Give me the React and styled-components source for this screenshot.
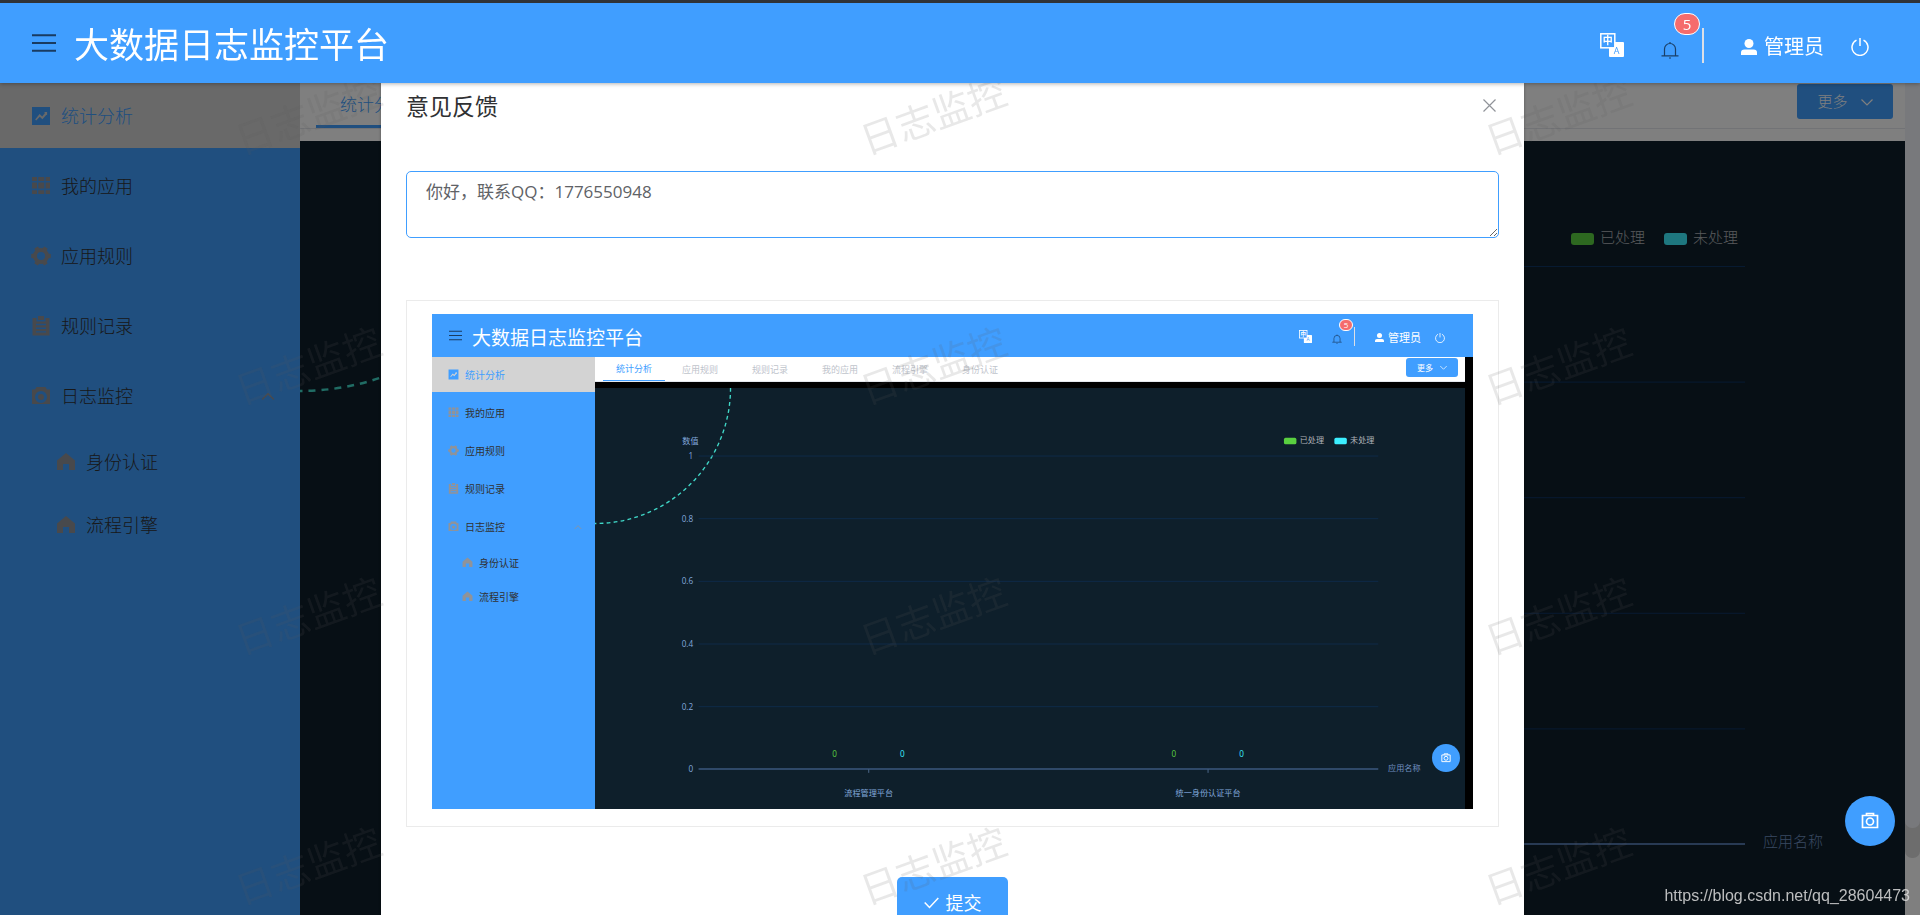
import React, { useState } from "react";
import styled, { createGlobalStyle, css, ThemeProvider } from "styled-components";

const GlobalStyle = createGlobalStyle`
* {
  box-sizing: border-box;
}
body {
  margin: 0;
  overflow: hidden;
  font-family: "Open Sans", "Noto Sans CJK SC", sans-serif;
  font-weight: 300;
  color: #303133;
}
button, textarea {
  font-family: inherit;
  font-weight: inherit;
}
`

// sizes of the live page
const pageSizes = {
  navHeight: 80, navLeft: 32, navRight: 51, menuIcon: 24, menuGap: 18, title: 35, titleTop: 2,
  translate: 24, translateGap: 37, bell: 18, bellTop: 14, bellGap: 23,
  badgeW: 26, badgeH: 22, badgeTop: -28, badgeLeft: 13, badgeFont: 15,
  dividerW: 2, dividerH: 35, dividerTop: 4, dividerGap: 37, user: 16, userGap: 7, userFont: 20, userTop: 8, powerGap: 27, power: 18,
  side: 300, item: 65, itemGap: 5, itemPad: 31, itemFont: 18, icon: 20, iconGap: 10, subItem: 58, subPad: 56, arrow: 14, arrowRight: 25,
  tabsHeight: 46, tabsLeft: 16, tabFont: 17, activePad: 24, tabPad: 30, tabBar: 3,
  moreW: 96, moreH: 35, moreRight: 12, moreFont: 15, moreGap: 13, moreIcon: 12,
  contentGap: 12, contentBg: "#ffffff", float: 50, floatIcon: 18, floatRight: 25, floatBottom: 69
}

// sizes of the captured preview in the dialog
const previewSizes = {
  navHeight: 43, navLeft: 17, navRight: 28, menuIcon: 13, menuGap: 10, title: 19, titleTop: 5,
  translate: 13, translateGap: 20, bell: 10, bellTop: 7, bellGap: 12,
  badgeW: 14, badgeH: 12, badgeTop: -15, badgeLeft: 7, badgeFont: 8,
  dividerW: 1, dividerH: 19, dividerTop: 2, dividerGap: 20, user: 9, userGap: 4, userFont: 11, userTop: 4, powerGap: 14, power: 10,
  side: 163, item: 35, itemGap: 3, itemPad: 16, itemFont: 10, icon: 11, iconGap: 6, subItem: 31, subPad: 30, arrow: 8, arrowRight: 13,
  tabsHeight: 25, tabsLeft: 8, tabFont: 9, activePad: 13, tabPad: 17, tabBar: 1,
  moreW: 52, moreH: 19, moreRight: 7, moreFont: 8, moreGap: 7, moreIcon: 7,
  contentGap: 6, contentBg: "#000000", float: 28, floatIcon: 10, floatRight: 13, floatBottom: 37
}

const Page = styled.div`
display: flex;
flex-direction: column;
height: 100vh;
overflow: hidden;
border-top: 3px solid #303336;
`
const Nav = styled.header`
position: relative;
z-index: 10;
flex: none;
display: flex;
align-items: center;
height: ${p => p.theme.navHeight}px;
padding: 0 ${p => p.theme.navRight}px 0 ${p => p.theme.navLeft}px;
background-color: #409eff;
box-shadow: 0 1px 4px rgba(0, 0, 0, 0.3);
color: #fff;
`
const IconButton = styled.button`
position: relative;
display: flex;
padding: 0;
border: 0;
background: none;
color: inherit;
cursor: pointer;
`
const MenuButton = styled(IconButton)`
margin-right: ${p => p.theme.menuGap}px;
color: #193b61;
`
const BrandTitle = styled.h1`
flex: 1;
margin: ${p => p.theme.titleTop}px 0 0;
font-size: ${p => p.theme.title}px;
font-weight: 400;
line-height: 1;
white-space: nowrap;
`
const TranslateButton = styled(IconButton)`
margin-right: ${p => p.theme.translateGap}px;
margin-top: ${p => p.theme.dividerTop}px;
`
const BellButton = styled(IconButton)`
margin-top: ${p => p.theme.bellTop}px;
margin-right: ${p => p.theme.bellGap}px;
color: #1b4068;
`
const Badge = styled.span`
position: absolute;
top: ${p => p.theme.badgeTop}px;
left: ${p => p.theme.badgeLeft}px;
display: flex;
align-items: center;
justify-content: center;
width: ${p => p.theme.badgeW}px;
height: ${p => p.theme.badgeH}px;
border: 1px solid #fff;
border-radius: 12px;
background-color: #f56c6c;
color: #fff;
font-size: ${p => p.theme.badgeFont}px;
font-weight: 400;
line-height: 1;
`
const Divider = styled.span`
width: ${p => p.theme.dividerW}px;
height: ${p => p.theme.dividerH}px;
margin-top: ${p => p.theme.dividerTop}px;
margin-right: ${p => p.theme.dividerGap}px;
background-color: #dcdfe6;
`
const User = styled.span`
display: flex;
align-items: center;
gap: ${p => p.theme.userGap}px;
margin-top: ${p => p.theme.userTop}px;
margin-right: ${p => p.theme.powerGap}px;
font-size: ${p => p.theme.userFont}px;
font-weight: 400;
line-height: 1;
white-space: nowrap;
`
const PowerButton = styled(IconButton)`
margin-top: ${p => p.theme.userTop}px;
`

const Main = styled.div`
position: relative;
flex: 1;
display: flex;
min-height: 0;
`
const Sidebar = styled.nav`
flex: none;
width: ${p => p.theme.side}px;
background-color: #409eff;
`
const MenuItem = styled.a`
display: flex;
align-items: center;
gap: ${p => p.theme.iconGap}px;
height: ${p => p.$sub ? p.theme.subItem : p.theme.item}px;
margin-bottom: ${p => p.theme.itemGap}px;
padding: 0 ${p => p.theme.arrowRight}px 0 ${p => p.$sub ? p.theme.subPad : p.theme.itemPad}px;
background-color: ${p => p.$active ? "#d3d3d3" : "transparent"};
color: ${p => p.$active ? "#409eff" : "#303133"};
font-size: ${p => p.theme.itemFont}px;
line-height: 1;
text-decoration: none;
white-space: nowrap;

svg {
  color: ${p => p.$active ? "#409eff" : "#909399"};
}
`
const MenuLabel = styled.span`
flex: 1;
`

const Content = styled.section`
flex: 1;
display: flex;
flex-direction: column;
min-width: 0;
background-color: ${p => p.theme.contentBg};
`
const TabBar = styled.div`
flex: none;
display: flex;
align-items: flex-start;
justify-content: space-between;
height: ${p => p.theme.tabsHeight}px;
margin-bottom: ${p => p.theme.contentGap}px;
padding: 0 ${p => p.theme.moreRight}px 0 ${p => p.theme.tabsLeft}px;
border-bottom: 1px solid #e4e7ed;
background-color: #fff;
`
const Tabs = styled.div`
display: flex;
height: 100%;
`
const Tab = styled.a`
display: flex;
align-items: center;
padding: 0 ${p => p.$active ? p.theme.activePad : p.theme.tabPad}px;
font-size: ${p => p.theme.tabFont}px;
line-height: 1;
text-decoration: none;
white-space: nowrap;
color: ${p => p.$active ? "#409eff" : "#c0c4cc"};
${p => p.$active && css`
border-bottom: ${p.theme.tabBar}px solid #409eff;
`}
`
const MoreButton = styled.button`
display: flex;
align-items: center;
justify-content: center;
gap: ${p => p.theme.moreGap}px;
width: ${p => p.theme.moreW}px;
height: ${p => p.theme.moreH}px;
margin-top: 1px;
padding: 0;
border: 0;
border-radius: 3px;
background-color: #409eff;
color: #fff;
font-size: ${p => p.theme.moreFont}px;
line-height: 1;
white-space: nowrap;
`
const ChartArea = styled.div`
flex: 1;
min-height: 0;
overflow: hidden;
background-color: #0e1f2b;

svg {
  display: block;
  width: 100%;
}
`
const FloatButton = styled.button`
position: absolute;
z-index: 6;
right: ${p => p.theme.floatRight}px;
bottom: ${p => p.theme.floatBottom}px;
display: flex;
align-items: center;
justify-content: center;
width: ${p => p.theme.float}px;
height: ${p => p.theme.float}px;
padding: 0;
border: 0;
border-radius: 50%;
background-color: #409eff;
color: #fff;
`

const ScrollTrack = styled.div`
flex: none;
width: 15px;
display: flex;
padding-bottom: 57px;
background-color: #fff;
`
const ScrollShade = styled.div`
flex: 1;
display: flex;
padding-bottom: 30px;
border-radius: 0 0 7px 7px;
background-color: #dadada;
`
const ScrollThumb = styled.div`
flex: 1;
border-radius: 0 0 7px 7px;
background-color: #f0f2f8;
`
const PreviewTrack = styled.div`
flex: none;
width: 8px;
background-color: #000;
`

const Overlay = styled.div`
position: absolute;
inset: 0;
z-index: 5;
overflow: hidden;
padding-right: 15px;
background-color: rgba(0, 0, 0, 0.5);
`
const Dialog = styled.div`
width: 60%;
min-height: 100%;
margin: 0 auto;
padding: 11px 25px 50px;
background-color: #fff;
box-shadow: 0 1px 3px rgba(0, 0, 0, 0.3);
`
const DialogHeader = styled.div`
display: flex;
align-items: flex-start;
justify-content: space-between;
height: 24px;
padding-right: 3px;
color: #909399;
`
const DialogTitle = styled.h2`
margin: 0;
color: #303133;
font-size: 23px;
font-weight: 400;
line-height: 24px;
`
const CloseButton = styled(IconButton)`
padding: 5px 0;
`
const FeedbackForm = styled.form`
display: flex;
flex-direction: column;
align-items: center;
padding-top: 53px;
`
const Message = styled.textarea`
display: block;
width: 100%;
height: 67px;
padding: 8px 19px;
border: 1px solid #409eff;
border-radius: 5px;
outline: none;
background-color: #fff;
color: #606266;
font-size: 17px;
font-weight: 400;
line-height: 24px;
resize: vertical;
`
const PreviewCard = styled.div`
width: 100%;
margin: 62px 0 50px;
padding: 13px 25px 17px;
border: 1px solid #ebebeb;
`
const Preview = styled.div`
position: relative;
display: flex;
flex-direction: column;
aspect-ratio: 1041 / 495;
overflow: hidden;
font-weight: 400;

${Nav} {
  box-shadow: none;
}
`
const SubmitButton = styled.button`
display: flex;
align-items: center;
justify-content: center;
gap: 7px;
width: 111px;
height: 52px;
padding: 0;
border: 0;
border-radius: 5px;
background-color: #409eff;
color: #fff;
font-size: 18px;
font-weight: 400;
line-height: 1;
`

const Watermarks = styled.div`
position: fixed;
inset: -10px 0 0;
z-index: 8;
display: grid;
grid-template-columns: repeat(auto-fill, 625px);
grid-auto-rows: 250px;
overflow: hidden;
pointer-events: none;
`
const Watermark = styled.span`
display: flex;
align-items: center;
justify-content: center;
padding-right: 8px;
color: rgba(90, 90, 90, 0.14);
font-size: 38px;
font-weight: 400;
line-height: 1;

span {
  transform: rotate(-20deg);
}
`
const SourceLink = styled.a`
position: fixed;
right: 10px;
bottom: 9px;
z-index: 12;
color: rgba(220, 220, 220, 0.85);
font-family: "Liberation Sans", sans-serif;
font-size: 16px;
font-weight: 400;
line-height: 20px;
text-decoration: none;
`

const Icon = ({ size, children }) => (
  <svg width={size} height={size} viewBox="0 0 20 20" fill="currentColor" aria-hidden="true">
    {children}
  </svg>
)

const icons = {
  marketing: <path fillRule="evenodd" d="M1 1h18v18H1zM4.2 13.6l1 1 3.6-3.8 2.6 2.5 4-4.6.7.6V6h-3l.9.9-2.8 3.6-2.6-2.4z" />,
  grid: <path d="M1 1h5v4H1zm6.300 0h6v4h-6zm7.300 0H19v4h-4.400zM1 6.500h5v6H1zm6.300 0h6v6h-6zm7.300 0H19v6h-4.400zM1 14.200h5V18H1zm6.300 0h6V18h-6zm7.300 0H19V18h-4.400z" />,
  tools: (
    <>
      <circle cx="10" cy="10" r="6" fill="none" stroke="currentColor" strokeWidth="4" />
      {[30, 90, 150, 210, 270, 330].map(angle => (
        <path key={angle} d="M7.500 4L8 0.200h4L12.500 4z" transform={`rotate(${angle} 10 10)`} />
      ))}
    </>
  ),
  order: <path fillRule="evenodd" d="M7 0h6v4H7zM1.500 2H5.500v3.500h9V2h4v17.500h-17zM5 7.800V9.200h10V7.800zm0 3.700v1.400h10v-1.400zm0 3.700v1.400h10v-1.400z" />,
  camera: <path fillRule="evenodd" d="M5.500 1h9l1.500 2.500h3V18H1V3.500h3zM10 5a6 6 0 1 0 0 12 6 6 0 0 0 0-12zm0 3a3 3 0 1 1 0 6 3 3 0 0 1 0-6z" />,
  home: <path d="M10 1l9 7.500V18h-6v-6H7v6H1V8.500z" />
}

const MenuLines = ({ size }) => (
  <Icon size={size}>
    <path d="M0 3.500h20M0 10h20M0 16.500h20" stroke="currentColor" strokeWidth="1.700" />
  </Icon>
)

const TranslateIcon = ({ size }) => (
  <svg width={size} height={size} viewBox="0 0 24 24" aria-hidden="true">
    <rect x="9" y="9" width="15" height="15" rx="1" fill="#fff" />
    <rect x="0.800" y="0.800" width="14" height="14" fill="#409eff" stroke="#fff" strokeWidth="1.500" />
    <text x="7.800" y="11.200" fontSize="10" fontWeight="700" fill="#fff" textAnchor="middle">中</text>
    <text x="16.500" y="21" fontSize="9" fontWeight="400" fill="#409eff" textAnchor="middle">A</text>
  </svg>
)

const BellIcon = ({ size }) => (
  <svg width={size} height={size} viewBox="0 0 18 18" fill="none" stroke="currentColor" strokeWidth="1.200" aria-hidden="true">
    <path d="M3.500 14.500V8a5.500 5.500 0 0 1 11 0v6.500M0.500 14.800h17M8 17h2M9 1v1.500" />
  </svg>
)

const UserIcon = ({ size }) => (
  <svg width={size} height={size} viewBox="0 0 16 16" fill="currentColor" aria-hidden="true">
    <circle cx="8" cy="4.500" r="4.500" />
    <path d="M0 16v-2.500q0-3 3.500-3h9q3.500 0 3.500 3V16z" />
  </svg>
)

const PowerIcon = ({ size }) => (
  <svg width={size} height={size} viewBox="0 0 18 18" fill="none" stroke="currentColor" strokeWidth="1.500" aria-hidden="true">
    <path d="M5.500 2.200a8 8 0 1 0 7 0M9 0v8" />
  </svg>
)

const Chevron = ({ size, up }) => (
  <svg width={size} height={size} viewBox="0 0 12 12" fill="none" stroke="currentColor" strokeWidth="1.200" aria-hidden="true">
    <path d={up ? "M1 9l5-5 5 5" : "M0.500 3.500L6 9l5.500-5.500"} />
  </svg>
)

const CameraIcon = ({ size }) => (
  <svg width={size} height={size} viewBox="0 0 18 18" fill="none" stroke="currentColor" strokeWidth="1.700" aria-hidden="true">
    <path d="M1.500 3.500h15v12h-15zM5.500 3.500v-2h7v2" />
    <circle cx="9" cy="9.500" r="3.500" />
  </svg>
)

const CloseIcon = () => (
  <svg width="13" height="13" viewBox="0 0 13 13" stroke="currentColor" strokeWidth="1.200" aria-hidden="true">
    <path d="M0.500 0.500l12 12M12.500 0.500l-12 12" />
  </svg>
)

const CheckIcon = () => (
  <svg width="15" height="12" viewBox="0 0 15 12" fill="none" stroke="currentColor" strokeWidth="1.500" aria-hidden="true">
    <path d="M0.700 5.500l4.800 5L14.300 1" />
  </svg>
)

const menu = [
  { label: "统计分析", icon: "marketing", active: true },
  { label: "我的应用", icon: "grid" },
  { label: "应用规则", icon: "tools" },
  { label: "规则记录", icon: "order" },
  { label: "日志监控", icon: "camera", open: true },
  { label: "身份认证", icon: "home", sub: true },
  { label: "流程引擎", icon: "home", sub: true }
]

const tabs = ["统计分析", "应用规则", "规则记录", "我的应用", "流程引擎", "身份认证"]

const TopBar = ({ sizes }) => (
  <Nav>
    <MenuButton type="button" aria-label="菜单"><MenuLines size={sizes.menuIcon} /></MenuButton>
    <BrandTitle>大数据日志监控平台</BrandTitle>
    <TranslateButton type="button" aria-label="语言"><TranslateIcon size={sizes.translate} /></TranslateButton>
    <BellButton type="button" aria-label="消息">
      <BellIcon size={sizes.bell} />
      <Badge>5</Badge>
    </BellButton>
    <Divider />
    <User><UserIcon size={sizes.user} />管理员</User>
    <PowerButton type="button" aria-label="退出"><PowerIcon size={sizes.power} /></PowerButton>
  </Nav>
)

const SideMenu = ({ sizes }) => (
  <Sidebar>
    {menu.map(item => (
      <MenuItem key={item.label} href="#" $active={item.active} $sub={item.sub}>
        <Icon size={sizes.icon}>{icons[item.icon]}</Icon>
        <MenuLabel>{item.label}</MenuLabel>
        {item.open && <Chevron size={sizes.arrow} up />}
      </MenuItem>
    ))}
  </Sidebar>
)

const yTicks = [1, 0.8, 0.6, 0.4, 0.2, 0]
const apps = [
  { name: "流程管理平台", x: 505 },
  { name: "统一身份认证平台", x: 1131 }
]

const Chart = () => (
  <svg viewBox="0 0 1605 772" fontSize="15" role="img" aria-label="应用日志统计">
    <circle cx="0" cy="0" r="250" fill="none" stroke="#40d8c8" strokeWidth="2.500" strokeDasharray="7 6" />
    <rect x="1271" y="92" width="23" height="12" rx="3" fill="#5ad040" />
    <text x="1300" y="102" fill="#b0b3b8">已处理</text>
    <rect x="1364" y="92" width="23" height="12" rx="3" fill="#3ceeff" />
    <text x="1393" y="102" fill="#b0b3b8">未处理</text>
    <g fill="#82a8dc" textAnchor="end">
      <text x="191" y="104">数值</text>
      {yTicks.map((tick, i) => (
        <text key={tick} x="181" y={131 + i * 115.6}>{tick}</text>
      ))}
    </g>
    {yTicks.slice(0, 5).map((tick, i) => (
      <path key={tick} d={`M191 ${125.5 + i * 115.6}H1445`} stroke="#0f3463" />
    ))}
    <path d="M191 703H1445" stroke="#5074a8" strokeWidth="2" />
    {apps.map(app => (
      <g key={app.name} textAnchor="middle">
        <path d={`M${app.x} 704v6`} stroke="#82a8dc" />
        <text x={app.x - 63} y="681" fill="#5ad040">0</text>
        <text x={app.x + 62} y="681" fill="#3ceeff">0</text>
        <text x={app.x} y="752" fill="#82a8dc">{app.name}</text>
      </g>
    ))}
    <text x="1463" y="706" fill="#7190c0">应用名称</text>
  </svg>
)

const Workspace = ({ sizes }) => (
  <Content>
    <TabBar>
      <Tabs>
        {tabs.map((tab, i) => (
          <Tab key={tab} href="#" $active={i === 0}>{tab}</Tab>
        ))}
      </Tabs>
      <MoreButton type="button">更多<Chevron size={sizes.moreIcon} /></MoreButton>
    </TabBar>
    <ChartArea><Chart /></ChartArea>
  </Content>
)

const ScreenPreview = () => (
  <ThemeProvider theme={previewSizes}>
    <Preview inert>
      <TopBar sizes={previewSizes} />
      <Main>
        <SideMenu sizes={previewSizes} />
        <Workspace sizes={previewSizes} />
        <PreviewTrack />
      </Main>
      <FloatButton type="button"><CameraIcon size={previewSizes.floatIcon} /></FloatButton>
    </Preview>
  </ThemeProvider>
)

const FeedbackDialog = () => {

  const [message, setMessage] = useState("你好，联系QQ：1776550948")

  const handleChange = event => {
    setMessage(event.target.value)
  }

  const handleSubmit = event => {
    event.preventDefault();
  }

  return (
    <Overlay>
      <Dialog role="dialog" aria-labelledby="feedback-title">
        <DialogHeader>
          <DialogTitle id="feedback-title">意见反馈</DialogTitle>
          <CloseButton type="button" aria-label="关闭"><CloseIcon /></CloseButton>
        </DialogHeader>
        <FeedbackForm onSubmit={handleSubmit}>
          <Message
            name="message"
            aria-labelledby="feedback-title"
            value={message}
            onChange={handleChange}
          />
          <PreviewCard>
            <ScreenPreview />
          </PreviewCard>
          <SubmitButton type="submit"><CheckIcon />提交</SubmitButton>
        </FeedbackForm>
      </Dialog>
    </Overlay>
  )
}

const App = () => {
  return (
    <ThemeProvider theme={pageSizes}>
      <GlobalStyle />
      <Page>
        <TopBar sizes={pageSizes} />
        <Main>
          <SideMenu sizes={pageSizes} />
          <Workspace sizes={pageSizes} />
          <ScrollTrack>
            <ScrollShade>
              <ScrollThumb />
            </ScrollShade>
          </ScrollTrack>
          <FeedbackDialog />
          <FloatButton type="button" aria-label="截图"><CameraIcon size={pageSizes.floatIcon} /></FloatButton>
        </Main>
        <Watermarks aria-hidden="true">
          {Array.from({ length: 12 }, (_, i) => (
            <Watermark key={i}><span>日志监控</span></Watermark>
          ))}
        </Watermarks>
        <SourceLink href="https://blog.csdn.net/qq_28604473">https://blog.csdn.net/qq_28604473</SourceLink>
      </Page>
    </ThemeProvider>
  );
};

export default App;
